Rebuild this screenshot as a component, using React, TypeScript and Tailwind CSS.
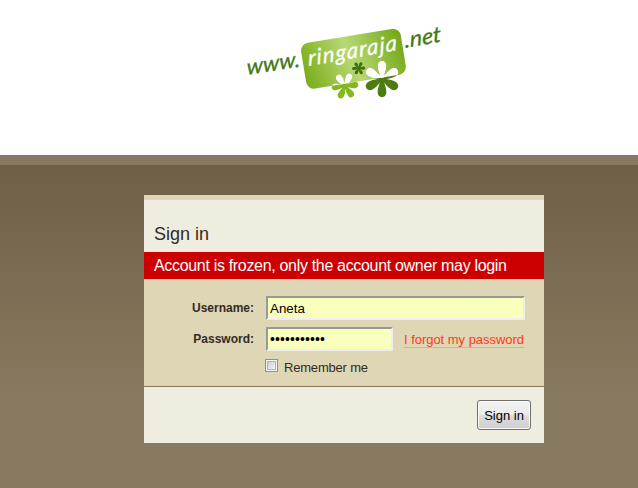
import React from "react";

const ANGLES = [0, 60, 120, 180, 240, 300];

function Flower({ x, y, s, turn, fill }: { x: number; y: number; s: number; turn: number; fill: string }) {
  return (
    <g transform={`translate(${x} ${y}) rotate(${turn}) scale(${s})`} fill={fill}>
      <circle r="3.6" />
      {ANGLES.map((a) => (
        <path key={a} transform={`rotate(${a})`} d="M-1.4 0C-1.6 -4 -4.3 -8 -4.3 -12.8C-4.3 -15.8 -2.6 -17.8 0 -17.8C2.6 -17.8 4.3 -15.8 4.3 -12.8C4.3 -8 1.6 -4 1.4 0Z" />
      ))}
    </g>
  );
}

function Logo() {
  return (
    <svg width="210" height="90" viewBox="240 18 210 90" className="mt-[18px] ml-[240px] block">
      <defs>
        <linearGradient id="leaf" gradientUnits="userSpaceOnUse" x1="304" y1="74" x2="405" y2="50">
          <stop offset="0" stopColor="#7bae1c" />
          <stop offset="0.48" stopColor="#b9d873" />
          <stop offset="1" stopColor="#74a818" />
        </linearGradient>
        <clipPath id="plate">
          <rect x="303" y="35.5" width="101" height="46.5" rx="8" transform="rotate(-9.3 353.5 59)" />
        </clipPath>
      </defs>
      <rect x="303" y="35.5" width="101" height="46.5" rx="8" fill="url(#leaf)" transform="rotate(-9.3 353.5 59)" />
      <Flower x={345} y={86} s={0.75} turn={24} fill="#84b81c" />
      <Flower x={382} y={79} s={1.02} turn={0} fill="#4c7c12" />
      <g clipPath="url(#plate)">
        <Flower x={345} y={86} s={0.75} turn={24} fill="#fff" />
        <Flower x={382} y={79} s={1.02} turn={0} fill="#fff" />
      </g>
      <Flower x={358.6} y={68.3} s={0.37} turn={28} fill="#3f7010" />
      <g fontFamily="Lato, 'Open Sans', sans-serif" fontStyle="italic" fontSize="22">
        <text transform="translate(247 75) rotate(-9) skewX(-7)" textLength="54" lengthAdjust="spacingAndGlyphs" fill="#457713" stroke="#457713" strokeWidth="0.3">www.</text>
        <text transform="translate(308.5 66) rotate(-10) skewX(-7)" textLength="90" fill="#fff" stroke="#fff" strokeWidth="0.3">ringaraja</text>
        <text transform="translate(405 48) rotate(-10) skewX(-7)" textLength="37" lengthAdjust="spacingAndGlyphs" fill="#457713" stroke="#457713" strokeWidth="0.3">.net</text>
      </g>
    </svg>
  );
}

const field = "h-6 border-2 border-t-[#999] border-l-[#999] border-r-[#eee] border-b-[#eee] bg-[#faffbd] pl-0.5 pr-0 text-black outline-none";

export default function App() {
  return (
    <div className="flex h-[488px] w-[638px] flex-col overflow-hidden bg-[#887a60] font-['Liberation_Sans',Arial,sans-serif] text-[#332b25]">
      <header className="h-[155px] shrink-0 bg-white"><Logo /></header>
      <main className="mt-2.5 flex-1 bg-linear-to-b from-[#705f47] to-[#887a60] to-[235px] pt-[30px] pl-[144px]">
        <form className="flex h-[248px] w-[400px] flex-col border-t-5 border-[#dfd6b6] bg-[#efeddf]" onSubmit={(e) => e.preventDefault()}>
          <h1 className="h-[52px] shrink-0 pt-[22px] pl-2.5 text-[18px] leading-6">Sign in</h1>
          <div className="h-[27px] shrink-0 bg-[#cc0000] pl-2.5 text-[16px] leading-[27px] text-white">
            <svg width="370" height="27" className="block"><text x="0" y="19" textLength="353" fill="#fff">Account is frozen, only the account owner may login</text></svg>
          </div>
          <div className="h-[108px] shrink-0 border-b border-[#887a60] bg-[#dfd6b6] pt-[17px] text-[13px]">
            <div className="flex h-6 items-center">
              <label htmlFor="u" className="w-[111px] pr-px text-right text-[12px] font-bold">Username:</label>
              <input id="u" className={`ml-[11px] w-[259px] text-[13.33px] ${field}`} defaultValue="Aneta" />
            </div>
            <div className="mt-[7px] flex h-6 items-center">
              <label htmlFor="p" className="w-[111px] pr-px text-right text-[12px] font-bold">Password:</label>
              <input id="p" type="password" className={`ml-[11px] w-[127px] text-[14px] tracking-[0.1px] ${field}`} defaultValue="abcdefghijk" />
              <a className="ml-[11px] h-[17px] w-[120px] border-b border-[#c5ba98] text-[13px] leading-4 whitespace-nowrap text-[#ff3a18]">
                <svg width="120" height="16" className="block overflow-visible"><text x="0" y="13" textLength="120" fill="#ff3a18">I forgot my password</text></svg>
              </a>
            </div>
            <label className="mt-2 ml-[121px] flex h-[13px] items-center">
              <span className="flex size-[13px] items-center justify-center border border-[#8e8f8f] bg-[#f4f4f4]">
                <span className="size-[9px] border border-[#aeb3b9] bg-linear-to-br from-[#cbcfd5] to-[#f6f6f6]" />
              </span>
              <svg width="90" height="18" className="ml-1.5 mt-1 block overflow-visible"><text x="0" y="13" textLength="84" fill="#332b25">Remember me</text></svg>
            </label>
          </div>
          <div className="flex justify-end pt-[13px] pr-[13px]">
            <button className="h-[30px] w-[54px] rounded-[3px] border border-[#707070] bg-[linear-gradient(#f2f2f2_0%,#ebebeb_49%,#dddddd_50%,#cfcfcf_100%)] pt-px text-[13px] whitespace-nowrap text-black shadow-[inset_0_0_0_1px_#fbfbfb]">Sign in</button>
          </div>
        </form>
      </main>
    </div>
  );
}
